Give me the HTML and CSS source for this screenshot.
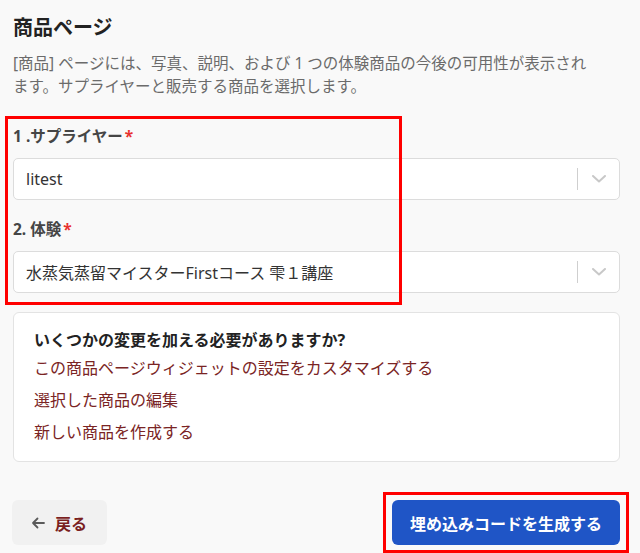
FILE: index.html
```html
<!DOCTYPE html>
<html lang="ja">
<head>
<meta charset="utf-8">
<title>商品ページ</title>
<link rel="stylesheet" href="styles.css">
</head>
<body>
<div class="page">
  <h1 class="title">商品ページ</h1>
  <p class="desc">[商品] ページには、写真、説明、および 1 つの体験商品の今後の可用性が表示され<br>ます。サプライヤーと販売する商品を選択します。</p>

  <div class="fields">
    <div class="field">
      <div class="label">1 .サプライヤー<span class="req">*</span></div>
      <div class="select">
        <span class="value">litest</span>
        <span class="sep"></span>
        <span class="chev"><svg width="14" height="8" viewBox="0 0 14 8"><path d="M1 1 L7 6.5 L13 1" fill="none" stroke="#c8c8c8" stroke-width="2" stroke-linecap="round" stroke-linejoin="round"/></svg></span>
      </div>
    </div>
    <div class="field">
      <div class="label">2. 体験<span class="req">*</span></div>
      <div class="select">
        <span class="value">水蒸気蒸留マイスターFirstコース 雫１講座</span>
        <span class="sep"></span>
        <span class="chev"><svg width="14" height="8" viewBox="0 0 14 8"><path d="M1 1 L7 6.5 L13 1" fill="none" stroke="#c8c8c8" stroke-width="2" stroke-linecap="round" stroke-linejoin="round"/></svg></span>
      </div>
    </div>
    <div class="annot annot-fields"></div>
  </div>

  <div class="card">
    <div class="card-title">いくつかの変更を加える必要がありますか?</div>
    <a class="link" href="#">この商品ページウィジェットの設定をカスタマイズする</a>
    <a class="link" href="#">選択した商品の編集</a>
    <a class="link" href="#">新しい商品を作成する</a>
  </div>

  <div class="actions">
    <button class="btn-back" type="button">
      <svg class="arrow" width="14" height="12" viewBox="0 0 14 12"><path d="M13 6 H2 M6.5 1.5 L2 6 L6.5 10.5" fill="none" stroke="#5a5a5a" stroke-width="1.8" stroke-linecap="round" stroke-linejoin="round"/></svg>
      <span>戻る</span>
    </button>
    <div class="primary-wrap">
      <button class="btn-primary" type="button">埋め込みコードを生成する</button>
      <div class="annot annot-primary"></div>
    </div>
  </div>
</div>
</body>
</html>
```

FILE: styles.css
```css
html, body {
  margin: 0;
  background: #f9f9f9;
}

body {
  font-family: "Noto Sans", "Noto Sans CJK JP", sans-serif;
}

.page {
  display: flex;
  flex-direction: column;
  padding: 15px 20px 9px 13px;
}

.title {
  margin: 0;
  font-size: 20px;
  line-height: 26px;
  font-weight: 700;
  color: #222;
}

.desc {
  margin: 11px 0 0;
  font-size: 15.5px;
  line-height: 23px;
  color: #6b6b6b;
}

.fields {
  position: relative;
  margin-top: 27px;
  display: flex;
  flex-direction: column;
  gap: 18px;
}

.field {
  display: flex;
  flex-direction: column;
  gap: 11px;
}

.label {
  font-size: 15.5px;
  line-height: 22px;
  font-weight: 700;
  color: #454545;
}

.req {
  color: #e8302e;
  margin-left: 2px;
}

.select {
  height: 42px;
  box-sizing: border-box;
  border: 1px solid #dcdcdc;
  border-radius: 5px;
  background: #fff;
  display: flex;
  align-items: center;
}

.value {
  flex: 1;
  padding-left: 12px;
  font-size: 16px;
  color: #333;
}

.sep {
  width: 1px;
  height: 22px;
  background: #cfcfcf;
}

.chev {
  width: 41px;
  display: flex;
  justify-content: center;
  align-items: center;
}

.annot {
  position: absolute;
  border: 3px solid #ff0000;
  box-sizing: border-box;
  pointer-events: none;
}

.annot-fields {
  left: -8px;
  top: -9px;
  width: 397px;
  height: 189px;
}

.card {
  margin-top: 19px;
  background: #fff;
  border: 1px solid #e3e3e3;
  border-radius: 6px;
  padding: 15px 20px 13px;
  display: flex;
  flex-direction: column;
}

.card-title {
  font-size: 16px;
  line-height: 24px;
  font-weight: 700;
  color: #222;
}

.link {
  font-size: 16px;
  line-height: 32px;
  color: #7a2424;
  text-decoration: none;
}

.actions {
  margin-top: 38px;
  display: flex;
  justify-content: space-between;
  align-items: center;
}

.btn-back {
  height: 45px;
  padding: 0 20px 0 19px;
  margin-left: -1px;
  background: #f1f1f1;
  border: none;
  border-radius: 6px;
  display: flex;
  align-items: center;
  gap: 10px;
  font-family: inherit;
  font-weight: 700;
  font-size: 16px;
  color: #7a1f1f;
}

.primary-wrap {
  position: relative;
}

.btn-primary {
  display: block;
  width: 228px;
  height: 45px;
  background: #1f55c6;
  color: #fff;
  font-family: inherit;
  font-weight: 700;
  font-size: 16px;
  border: none;
  border-radius: 6px;
}

.annot-primary {
  left: -9px;
  top: -8px;
  width: 246px;
  height: 61px;
}
```
